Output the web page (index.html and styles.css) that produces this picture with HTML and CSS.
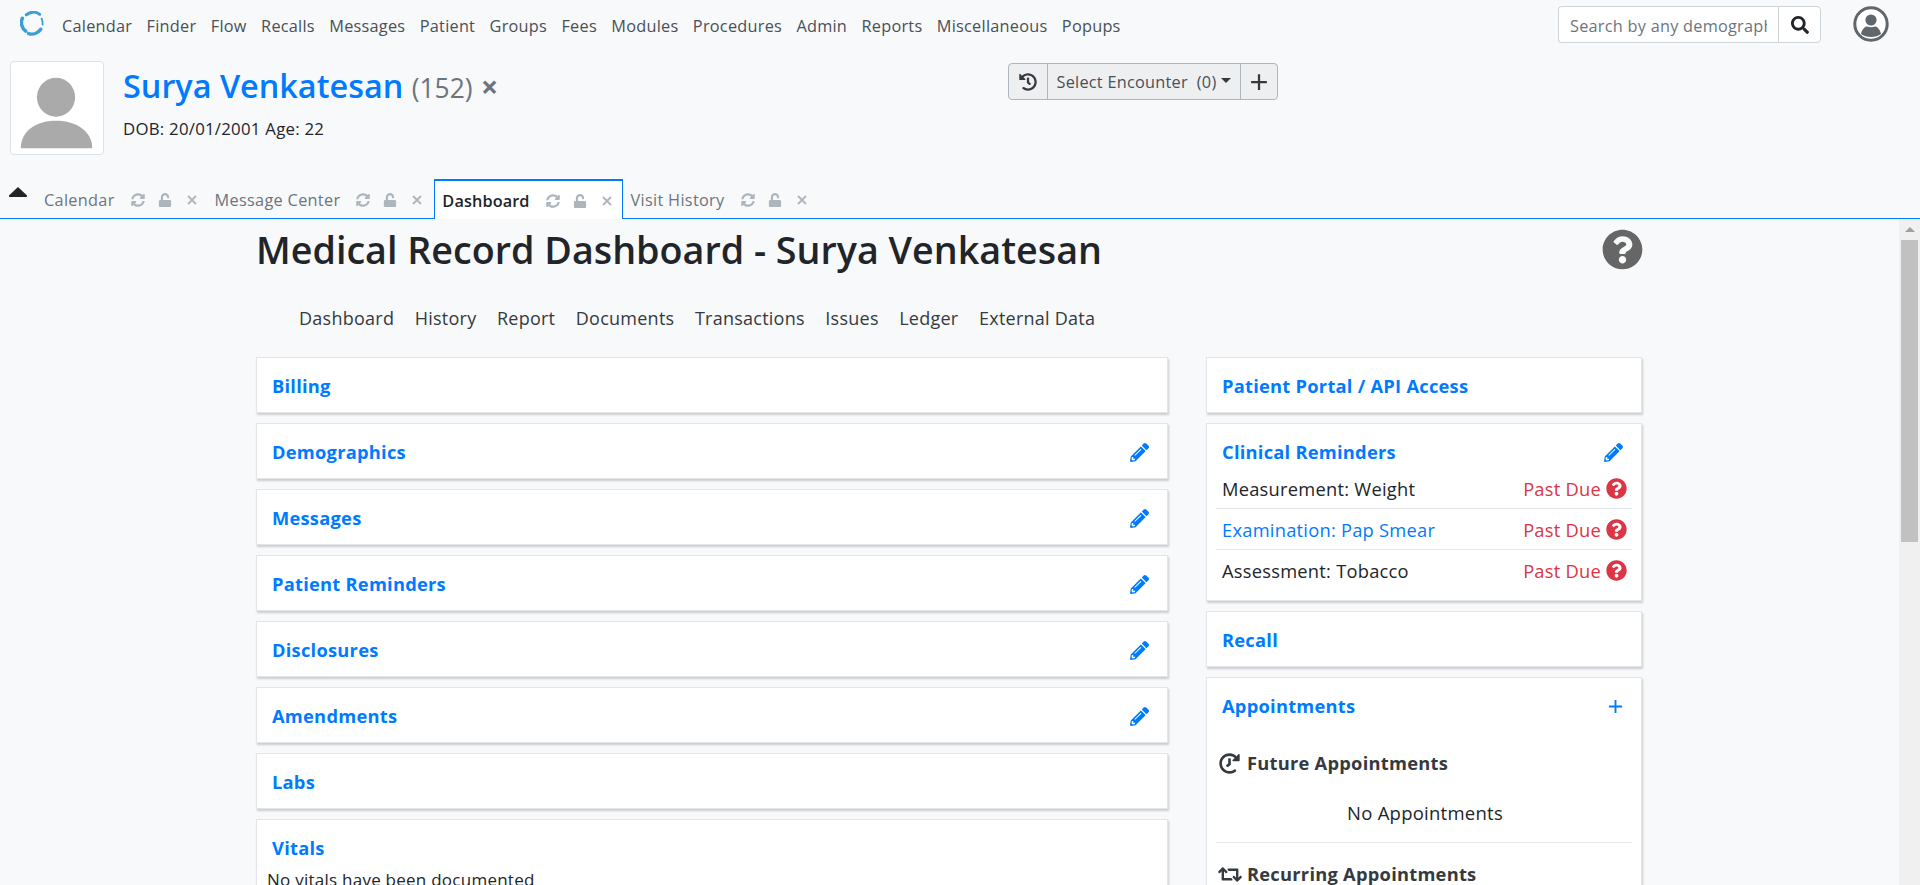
FILE: index.html
```html
<!DOCTYPE html>
<html lang="en">
<head>
    <meta charset="UTF-8">
    <meta name="viewport" content="width=device-width, initial-scale=1.0">
    <title>Medical Record Dashboard</title>
    <link rel="stylesheet" href="styles.css">
</head>
<body>
    <svg class="icon-defs" xmlns="http://www.w3.org/2000/svg">
        <symbol id="i-pencil" viewBox="0 0 512 512"><path d="M497.9 142.1l-46.1 46.1c-4.7 4.7-12.3 4.7-17 0l-111-111c-4.7-4.7-4.7-12.3 0-17l46.1-46.1c18.7-18.7 49.1-18.7 67.9 0l60.1 60.1c18.8 18.7 18.8 49.1 0 67.9zM284.2 99.8L21.6 362.4.4 483.9c-2.9 16.4 11.4 30.6 27.8 27.8l121.5-21.3 262.6-262.6c4.7-4.7 4.7-12.3 0-17l-111-111c-4.8-4.7-12.4-4.7-17.1 0zM124.1 339.9c-5.5-5.5-5.5-14.3 0-19.8l154-154c5.5-5.5 14.3-5.5 19.8 0s5.5 14.3 0 19.8l-154 154c-5.5 5.5-14.3 5.5-19.8 0zM88 424h48v36.3l-64.5 11.3-31.1-31.1L51.7 376H88v48z"/></symbol>
        <symbol id="i-search" viewBox="0 0 512 512"><path d="M505 442.7L405.3 343c-4.5-4.5-10.6-7-17-7H372c27.6-35.3 44-79.7 44-128C416 93.1 322.9 0 208 0S0 93.1 0 208s93.1 208 208 208c48.3 0 92.7-16.4 128-44v16.3c0 6.4 2.5 12.5 7 17l99.7 99.7c9.4 9.4 24.6 9.4 33.9 0l28.3-28.3c9.4-9.4 9.4-24.6.1-34zM208 336c-70.7 0-128-57.2-128-128 0-70.7 57.2-128 128-128 70.7 0 128 57.2 128 128 0 70.7-57.2 128-128 128z"/></symbol>
        <symbol id="i-question" viewBox="0 0 512 512"><path d="M504 256c0 136.997-111.043 248-248 248S8 392.997 8 256C8 119.083 119.043 8 256 8s248 111.083 248 248zM262.655 90c-54.497 0-89.255 22.957-116.549 63.758-3.536 5.286-2.353 12.415 2.715 16.258l34.699 26.31c5.205 3.947 12.621 3.008 16.665-2.122 17.864-22.658 30.113-35.797 57.303-35.797 20.429 0 45.698 13.148 45.698 32.958 0 14.976-12.363 22.667-32.534 33.976C247.128 238.528 216 254.941 216 296v4c0 6.627 5.373 12 12 12h56c6.627 0 12-5.373 12-12v-1.333c0-28.462 83.186-29.647 83.186-106.667 0-58.002-60.165-102-116.531-102zM256 338c-25.365 0-46 20.635-46 46 0 25.364 20.635 46 46 46s46-20.636 46-46c0-25.365-20.635-46-46-46z"/></symbol>
        <symbol id="i-history" viewBox="0 0 512 512"><path d="M504 255.531c.253 136.64-111.18 248.372-247.82 248.468-59.015.042-113.223-20.53-155.822-54.911-11.077-8.94-11.905-25.541-1.839-35.607l11.267-11.267c8.609-8.609 22.353-9.551 31.891-1.984C173.062 425.135 212.781 440 256 440c101.705 0 184-82.311 184-184 0-101.705-82.311-184-184-184-48.814 0-93.149 18.969-126.068 49.932l50.754 50.754c10.08 10.08 2.941 27.314-11.313 27.314H24c-8.837 0-16-7.163-16-16V38.627c0-14.254 17.234-21.393 27.314-11.314l49.372 49.372C129.209 34.136 189.552 8 256 8c136.81 0 247.747 110.78 248 247.531zm-180.912 78.784l9.823-12.63c8.138-10.463 6.253-25.542-4.21-33.679L288 256.349V152c0-13.255-10.745-24-24-24h-16c-13.255 0-24 10.745-24 24v135.651l65.409 50.874c10.463 8.137 25.541 6.253 33.679-4.21z"/></symbol>
        <symbol id="i-sync" viewBox="0 0 512 512"><path d="M370.72 133.28C339.458 104.008 298.888 87.962 255.848 88c-77.458.068-144.328 53.178-162.791 126.85-1.344 5.363-6.122 9.15-11.651 9.15H24.103c-7.498 0-13.194-6.807-11.807-14.176C33.933 94.924 134.813 8 256 8c66.448 0 126.791 26.136 171.315 68.685L463.03 40.97C478.149 25.851 504 36.559 504 57.941V192c0 13.255-10.745 24-24 24H345.941c-21.382 0-32.09-25.851-16.971-40.971l41.75-41.749zM32 296h134.059c21.382 0 32.09 25.851 16.971 40.971l-41.75 41.75c31.262 29.273 71.835 45.319 114.876 45.28 77.418-.07 144.315-53.144 162.787-126.849 1.344-5.363 6.122-9.15 11.651-9.15h57.304c7.498 0 13.193 6.807 11.807 14.176C478.067 417.076 377.187 504 256 504c-66.448 0-126.791-26.136-171.315-68.685L48.97 471.03C33.851 486.149 8 475.441 8 454.059V320c0-13.255 10.745-24 24-24z"/></symbol>
        <symbol id="i-lock" viewBox="0 0 448 512"><path d="M400 256H152V152.9c0-39.6 31.7-72.5 71.3-72.9 40-.4 72.7 32.1 72.7 72v16c0 13.3 10.7 24 24 24h32c13.3 0 24-10.7 24-24v-16C376 68 307.5-.3 223.5 0 139.5.3 72 69.5 72 153.5V256H48c-26.5 0-48 21.5-48 48v160c0 26.5 21.5 48 48 48h352c26.5 0 48-21.5 48-48V304c0-26.5-21.5-48-48-48z"/></symbol>
        <symbol id="i-times" viewBox="0 0 14 14"><path d="M3 3l8 8M11 3l-8 8" fill="none" stroke="currentColor" stroke-width="1.8"/></symbol>
        <symbol id="i-plus" viewBox="0 0 16 16"><path d="M8 1v14M1 8h14" fill="none" stroke="currentColor" stroke-width="2"/></symbol>
        <symbol id="i-retweet" viewBox="0 0 640 512"><path d="M629.657 343.598L528.971 444.284c-9.373 9.372-24.568 9.372-33.941 0L394.343 343.598c-9.373-9.373-9.373-24.569 0-33.941l10.823-10.823c9.562-9.562 25.133-9.34 34.419.492L480 342.118V160H292.451a24.005 24.005 0 0 1-16.971-7.029l-16-16C244.361 121.851 255.069 96 276.451 96H520c13.255 0 24 10.745 24 24v222.118l40.416-42.792c9.285-9.831 24.856-10.054 34.419-.492l10.823 10.823c9.372 9.372 9.372 24.568-.001 33.941zm-265.138 15.431A23.999 23.999 0 0 0 347.548 352H160V169.881l40.416 42.792c9.286 9.831 24.856 10.054 34.419.491l10.822-10.822c9.373-9.373 9.373-24.569 0-33.941L144.971 67.716c-9.373-9.373-24.569-9.373-33.941 0L10.343 168.402c-9.373 9.373-9.373 24.569 0 33.941l10.822 10.822c9.562 9.562 25.133 9.34 34.419-.491L96 169.881V392c0 13.255 10.745 24 24 24h243.549c21.382 0 32.09-25.851 16.971-40.971l-16.001-16z"/></symbol>
    </svg>

    <nav class="navbar">
        <svg class="logo" viewBox="0 0 26 26">
            <path d="M6.5 4A11 11 0 0 1 20.5 3.5" fill="none" stroke="#3a9fd8" stroke-width="3" stroke-linecap="round"/>
            <path d="M2.5 7.5A11 11 0 0 0 6 21" fill="none" stroke="#3a9fd8" stroke-width="3.6" stroke-linecap="round"/>
            <path d="M9 23.5A11 11 0 0 0 21.5 19" fill="none" stroke="#3a9fd8" stroke-width="3.6" stroke-linecap="round"/>
            <path d="M22.5 8A11 11 0 0 1 23.5 14" fill="none" stroke="#3a9fd8" stroke-width="2" stroke-linecap="round"/>
        </svg>
        <ul class="menu">
            <li>Calendar</li>
            <li>Finder</li>
            <li>Flow</li>
            <li>Recalls</li>
            <li>Messages</li>
            <li>Patient</li>
            <li>Groups</li>
            <li>Fees</li>
            <li>Modules</li>
            <li>Procedures</li>
            <li>Admin</li>
            <li>Reports</li>
            <li>Miscellaneous</li>
            <li>Popups</li>
        </ul>
        <div class="search">
            <input class="search-input" type="text" placeholder="Search by any demographics">
            <button class="search-btn"><svg class="icon"><use href="#i-search"/></svg></button>
        </div>
        <svg class="avatar" viewBox="0 0 36 36">
            <circle cx="18" cy="18" r="16.2" fill="#fff" stroke="#5f666c" stroke-width="3"/>
            <circle cx="18" cy="14" r="5.6" fill="#5f666c"/>
            <path d="M8 28c1-5 4-7.5 6-7.5 2.5 1 5.5 1 8 0 2 0 5 2.5 6 7.5-5 4-15 4-20 0z" fill="#5f666c"/>
        </svg>
    </nav>

    <header class="patient">
        <div class="photo">
            <svg viewBox="0 0 94 94">
                <ellipse cx="46" cy="36" rx="19.5" ry="20" fill="#aaa"/>
                <path d="M10 88c0-17 15-28 36-28s37 11 37 28z" fill="#aaa"/>
            </svg>
        </div>
        <div class="patient-info">
            <h1 class="patient-name">Surya Venkatesan <small>(152)</small> <span class="patient-close">×</span></h1>
            <div class="patient-dob">DOB: 20/01/2001 Age: 22</div>
        </div>
        <div class="encounter">
            <button class="enc-btn enc-history"><svg class="icon"><use href="#i-history"/></svg></button>
            <button class="enc-btn enc-select">Select Encounter&nbsp; (0)<span class="caret"></span></button>
            <button class="enc-btn enc-add"><svg class="icon"><use href="#i-plus"/></svg></button>
        </div>
    </header>

    <div class="tabs">
        <svg class="collapse" viewBox="0 0 20 12"><path d="M10 1L19 9.5Q19.5 11 18 11H2Q.5 11 1 9.5z" fill="#212529"/></svg>
        <div class="tab">
            <span>Calendar</span>
            <svg class="tab-icon"><use href="#i-sync"/></svg>
            <svg class="tab-icon"><use href="#i-lock"/></svg>
            <svg class="tab-icon"><use href="#i-times"/></svg>
        </div>
        <div class="tab">
            <span>Message Center</span>
            <svg class="tab-icon"><use href="#i-sync"/></svg>
            <svg class="tab-icon"><use href="#i-lock"/></svg>
            <svg class="tab-icon"><use href="#i-times"/></svg>
        </div>
        <div class="tab active">
            <span>Dashboard</span>
            <svg class="tab-icon"><use href="#i-sync"/></svg>
            <svg class="tab-icon"><use href="#i-lock"/></svg>
            <svg class="tab-icon"><use href="#i-times"/></svg>
        </div>
        <div class="tab">
            <span>Visit History</span>
            <svg class="tab-icon"><use href="#i-sync"/></svg>
            <svg class="tab-icon"><use href="#i-lock"/></svg>
            <svg class="tab-icon"><use href="#i-times"/></svg>
        </div>
    </div>

    <div class="frame">
        <main class="page">
            <div class="title-row">
                <h2 class="page-title">Medical Record Dashboard - Surya Venkatesan</h2>
                <svg class="help"><use href="#i-question"/></svg>
            </div>
            <ul class="subnav">
                <li>Dashboard</li>
                <li>History</li>
                <li>Report</li>
                <li>Documents</li>
                <li>Transactions</li>
                <li>Issues</li>
                <li>Ledger</li>
                <li>External Data</li>
            </ul>
            <div class="columns">
                <section class="col-left">
                    <div class="card"><div class="card-head"><a class="card-title">Billing</a></div></div>
                    <div class="card"><div class="card-head"><a class="card-title">Demographics</a><svg class="edit"><use href="#i-pencil"/></svg></div></div>
                    <div class="card"><div class="card-head"><a class="card-title">Messages</a><svg class="edit"><use href="#i-pencil"/></svg></div></div>
                    <div class="card"><div class="card-head"><a class="card-title">Patient Reminders</a><svg class="edit"><use href="#i-pencil"/></svg></div></div>
                    <div class="card"><div class="card-head"><a class="card-title">Disclosures</a><svg class="edit"><use href="#i-pencil"/></svg></div></div>
                    <div class="card"><div class="card-head"><a class="card-title">Amendments</a><svg class="edit"><use href="#i-pencil"/></svg></div></div>
                    <div class="card"><div class="card-head"><a class="card-title">Labs</a></div></div>
                    <div class="card">
                        <div class="card-head"><a class="card-title">Vitals</a></div>
                        <p class="card-text">No vitals have been documented</p>
                    </div>
                </section>
                <section class="col-right">
                    <div class="card"><div class="card-head"><a class="card-title">Patient Portal / API Access</a></div></div>
                    <div class="card">
                        <div class="card-head"><a class="card-title">Clinical Reminders</a><svg class="edit"><use href="#i-pencil"/></svg></div>
                        <ul class="reminders">
                            <li><span>Measurement: Weight</span><span class="due">Past Due <svg class="due-icon"><use href="#i-question"/></svg></span></li>
                            <li><a class="link">Examination: Pap Smear</a><span class="due">Past Due <svg class="due-icon"><use href="#i-question"/></svg></span></li>
                            <li><span>Assessment: Tobacco</span><span class="due">Past Due <svg class="due-icon"><use href="#i-question"/></svg></span></li>
                        </ul>
                    </div>
                    <div class="card"><div class="card-head"><a class="card-title">Recall</a></div></div>
                    <div class="card">
                        <div class="card-head"><a class="card-title">Appointments</a><svg class="edit add"><use href="#i-plus"/></svg></div>
                        <h3 class="appt-head"><svg class="appt-icon flip"><use href="#i-history"/></svg>Future Appointments</h3>
                        <p class="appt-none">No Appointments</p>
                        <h3 class="appt-head recurring"><svg class="appt-icon wide"><use href="#i-retweet"/></svg>Recurring Appointments</h3>
                    </div>
                </section>
            </div>
        </main>
        <div class="scrollbar">
            <div class="scroll-up"></div>
            <div class="scroll-thumb"></div>
        </div>
    </div>
</body>
</html>
```

FILE: styles.css
```css
* {
    box-sizing: border-box;
}
html, body {
    height: 885px;
    overflow: hidden;
}
body {
    margin: 0;
    display: flex;
    flex-direction: column;
    font-family: 'Open Sans', 'Noto Sans', sans-serif;
    font-size: 16.3px;
    letter-spacing: 0.25px;
    background-color: #f8f9fa;
    color: #212529;
}
ul {
    list-style-type: none;
    margin: 0;
    padding: 0;
}
h1, h2, h3, p {
    margin: 0;
}
svg {
    display: block;
}
.icon-defs {
    display: none;
}
.icon {
    width: 18px;
    height: 18px;
    fill: currentColor;
}

/* top bar */
.navbar {
    display: flex;
    align-items: center;
    height: 52px;
    flex-shrink: 0;
    padding-left: 20px;
    padding-right: 31px;
}
.logo {
    width: 25px;
    height: 25px;
    margin-top: -6px;
}
.menu {
    display: flex;
    gap: 14.4px;
    margin-left: 17px;
    color: #495057;
}
.search {
    display: flex;
    margin-left: auto;
    margin-top: -3px;
    height: 37px;
}
.search-input {
    width: 220px;
    padding: 2px 11px 0;
    border: 1px solid #ced4da;
    border-right: none;
    border-radius: 4px 0 0 4px;
    font: inherit;
    letter-spacing: inherit;
    background: #fff;
}
.search-input::placeholder {
    color: #6c757d;
}
.search-btn {
    width: 43px;
    display: flex;
    align-items: center;
    justify-content: center;
    background: #fff;
    color: #212529;
    border: 1px solid #ced4da;
    border-radius: 0 4px 4px 0;
}
.avatar {
    width: 36px;
    height: 36px;
    margin-left: 32px;
    margin-top: -4px;
}

/* patient header */
.patient {
    display: flex;
    height: 127px;
    flex-shrink: 0;
    padding-left: 10px;
    padding-top: 9px;
}
.photo {
    width: 94px;
    height: 94px;
    background: #fff;
    border: 1px solid #dee2e6;
    border-radius: 4px;
}
.patient-info {
    width: 904px;
    padding-left: 19px;
}
.patient-name {
    font-size: 32.4px;
    font-weight: 600;
    line-height: 48px;
    letter-spacing: 0;
    color: #007bff;
}
.patient-name small {
    font-size: 26.4px;
    font-weight: 400;
    color: #6c757d;
}
.patient-close {
    font-size: 30px;
    font-weight: 700;
    color: #6c757d;
}
.patient-dob {
    margin-top: 5px;
    font-size: 16.8px;
    line-height: 24px;
}
.encounter {
    display: flex;
    height: 37px;
    margin-top: 2px;
    border: 1px solid #adb5bd;
    border-radius: 4px;
    background: #eeeff1;
}
.enc-btn {
    display: flex;
    align-items: center;
    justify-content: center;
    background: none;
    border: none;
    border-left: 1px solid #adb5bd;
    font: inherit;
    letter-spacing: inherit;
    color: #495057;
    padding: 0;
}
.enc-history {
    width: 38px;
    border-left: none;
    color: #343a40;
}
.enc-select {
    width: 193px;
    padding-top: 1px;
}
.enc-add {
    width: 37px;
    color: #343a40;
}
.caret {
    width: 0;
    height: 0;
    margin-left: 5px;
    margin-top: -3px;
    border-left: 5px solid transparent;
    border-right: 5px solid transparent;
    border-top: 5px solid #343a40;
}

/* tabs */
.tabs {
    display: flex;
    align-items: flex-end;
    height: 40px;
    flex-shrink: 0;
    padding-left: 8px;
    border-bottom: 1px solid #007bff;
}
.collapse {
    width: 20px;
    height: 12px;
    margin-right: 8px;
    margin-bottom: 20px;
}
.tab {
    display: flex;
    align-items: center;
    height: 39px;
    padding: 3px 8px 0;
    letter-spacing: 0.3px;
    color: #6c757d;
}
.tab.active {
    height: 40px;
    margin-left: 2px;
    margin-bottom: -1px;
    background: #fff;
    color: #212529;
    font-weight: 600;
    letter-spacing: 0.1px;
    border: 1px solid #007bff;
    border-top-width: 2px;
    border-bottom: none;
    padding: 1px 8px 0 7px;
}
.tab.active + .tab {
    padding-left: 7px;
    margin-left: 1px;
}
.tab-icon {
    width: 14px;
    height: 14px;
    margin-left: 13px;
    fill: #adb5bd;
    color: #adb5bd;
}
.tab span + .tab-icon {
    margin-left: 16px;
}

/* main area */
.frame {
    display: flex;
    flex: 1;
    min-height: 0;
}
.page {
    flex: 1;
    min-width: 0;
    overflow: hidden;
    padding-left: 256px;
    padding-right: 257px;
}
.scrollbar {
    width: 21px;
    flex-shrink: 0;
    background: #f0f0f0;
    padding: 0 2px;
}
.scroll-up {
    height: 21px;
    padding-top: 8px;
}
.scroll-up::before {
    content: "";
    display: block;
    width: 0;
    height: 0;
    margin: 0 auto;
    border-left: 5px solid transparent;
    border-right: 5px solid transparent;
    border-bottom: 5px solid #a0a0a0;
}
.scroll-thumb {
    height: 302px;
    background: #c1c1c1;
}
.title-row {
    display: flex;
    align-items: center;
    justify-content: space-between;
    height: 60px;
}
.page-title {
    font-size: 37.7px;
    font-weight: 600;
    letter-spacing: 0;
}
.help {
    width: 41px;
    height: 41px;
    fill: #666;
    margin-right: -1px;
}
.subnav {
    display: flex;
    gap: 20.5px;
    height: 40px;
    align-items: center;
    margin-top: 19px;
    padding-left: 43px;
    font-size: 18px;
    color: #343a40;
}
.columns {
    display: flex;
    gap: 38px;
    margin-top: 19px;
}
.col-left {
    width: 912px;
}
.col-right {
    width: 436px;
}
.card {
    background: #fff;
    border: 1px solid #e3e5e8;
    box-shadow: 1px 2px 2px rgba(0, 0, 0, 0.18);
    margin-bottom: 10px;
    padding-bottom: 10px;
}
.card-head {
    display: flex;
    align-items: center;
    justify-content: space-between;
    padding: 12px 15px 0;
    height: 44px;
}
.card-title {
    font-size: 18.3px;
    font-weight: 700;
    line-height: 32px;
    color: #007bff;
}
.edit {
    width: 19px;
    height: 19px;
    margin-right: 3px;
    fill: #007bff;
    color: #007bff;
}
.edit.add {
    margin-right: 3px;
    width: 15px;
    height: 15px;
}
.card-text {
    margin: 0 10px;
    font-size: 17px;
    line-height: 32px;
}
.reminders {
    margin: 0 9px;
    font-size: 18.3px;
}
.reminders li {
    display: flex;
    align-items: center;
    justify-content: space-between;
    height: 41px;
    padding: 0 5px 0 6px;
    border-bottom: 1px solid #e3e5e8;
}
.reminders li:last-child {
    height: 40px;
    border-bottom: none;
}
.link {
    color: #007bff;
}
.due {
    display: flex;
    align-items: center;
    gap: 5px;
    color: #dc3545;
}
.due-icon {
    width: 21px;
    height: 21px;
    fill: #dc3545;
}
.appt-head {
    display: flex;
    align-items: center;
    margin: 25px 9px 0;
    padding-left: 3px;
    font-size: 18.3px;
    font-weight: 700;
    line-height: 32px;
    color: #343a40;
}
.appt-head.recurring {
    margin-top: 0;
    padding-top: 15px;
    padding-left: 2px;
    border-top: 1px solid #e3e5e8;
}
.appt-icon {
    width: 21px;
    height: 21px;
    margin-right: 7px;
    fill: #343a40;
}
.appt-icon.flip {
    transform: scaleX(-1);
}
.appt-icon.wide {
    width: 24px;
    margin-right: 5px;
}
.appt-none {
    margin: 18px 9px 13px;
    padding-left: 2px;
    font-size: 18.5px;
    line-height: 32px;
    text-align: center;
}
```
